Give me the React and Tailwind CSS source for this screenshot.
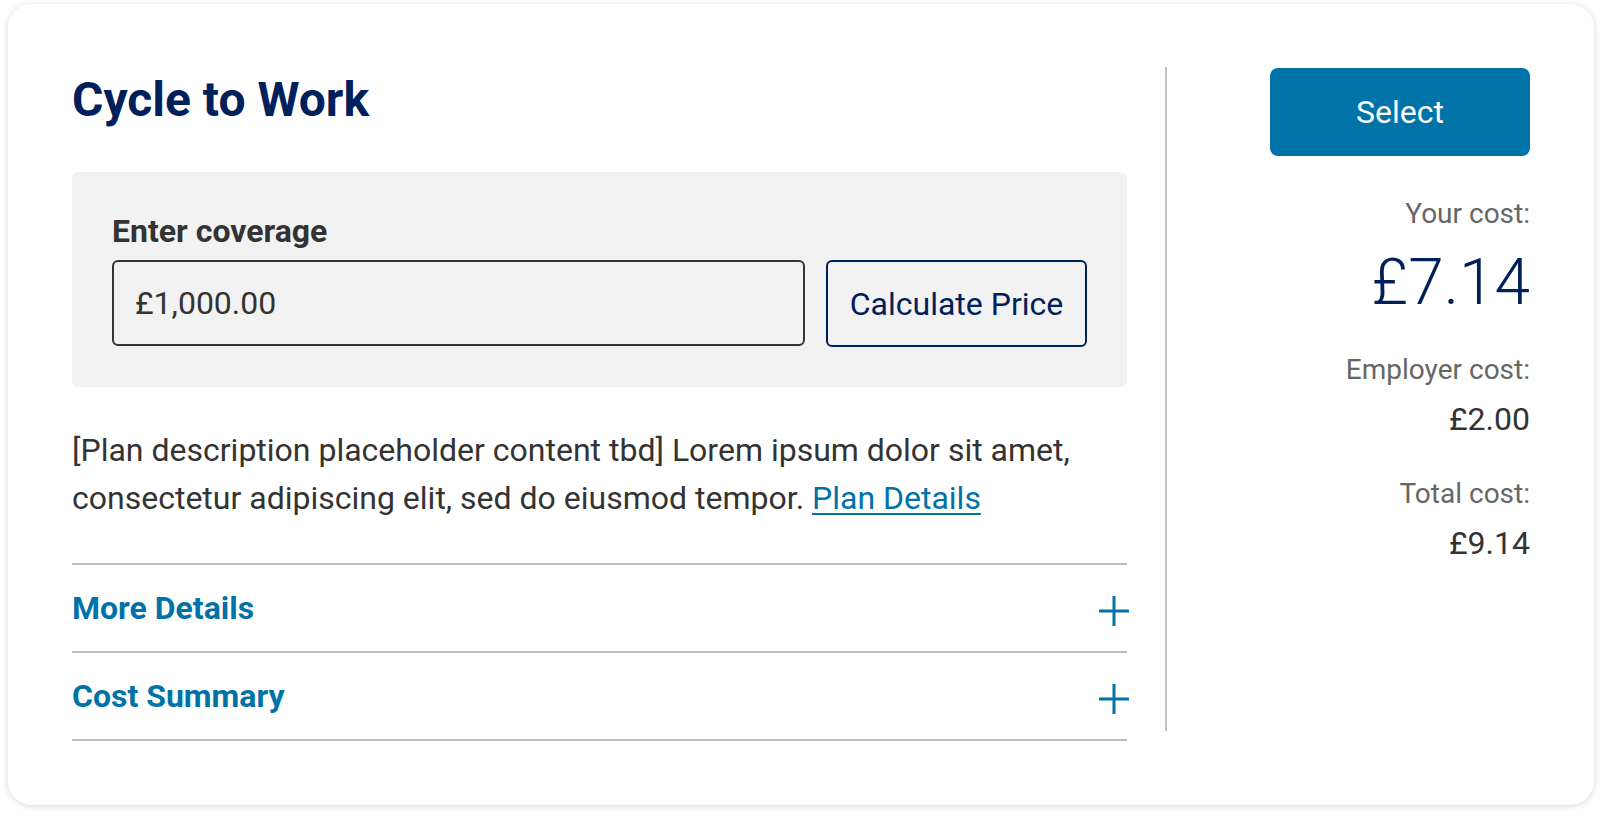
import React from "react";

function Plus() {
  return (
    <svg width="30" height="30" viewBox="0 0 30 30" className="-mr-[2px] mt-[6px] shrink-0">
      <path d="M15 0V30M0 15H30" stroke="#0072a8" strokeWidth="3" fill="none" />
    </svg>
  );
}

function AccordionRow({ title, last }) {
  return (
    <div
      className={
        "flex h-[88px] items-center justify-between border-t-2 border-[#bdbdbd] " +
        (last ? "border-b-2 h-[90px]" : "")
      }
    >
      <span className="text-[32px] font-bold leading-[40px] text-[#0072a8]">{title}</span>
      <Plus />
    </div>
  );
}

export default function App() {
  return (
    <div className="min-h-[818px] w-[1602px] bg-white px-[8px] pt-[4px] font-['Roboto',sans-serif]">
      <div className="flex w-[1586px] rounded-[24px] bg-white p-[64px] shadow-[0_1px_7px_rgba(0,0,0,0.16)]">
        {/* Left column */}
        <div className="flex w-[1055px] flex-col">
          <h1 className="text-[48px] font-bold leading-[64px] text-[#00205b]">Cycle to Work</h1>

          <div className="mt-[40px] rounded-[6px] bg-[#f2f2f2] p-[40px]">
            <div className="text-[32px] font-bold leading-[38px] text-[#333333]">Enter coverage</div>
            <div className="mt-[10px] flex gap-[21px]">
              <div className="flex h-[86px] flex-1 items-center rounded-[6px] border-2 border-[#333333] pl-[21px] text-[32px] text-[#333333]">
                £1,000.00
              </div>
              <button className="flex h-[87px] w-[261px] items-center justify-center rounded-[6px] border-2 border-[#00205b] text-[32px] text-[#00205b]">
                Calculate Price
              </button>
            </div>
          </div>

          <p className="mt-[39px] text-[32px] leading-[48px] text-[#333333]">
            [Plan description placeholder content tbd] Lorem ipsum dolor sit amet, consectetur adipiscing elit, sed do
            eiusmod tempor.{" "}
            <a href="#" className="text-[#0072a8] underline underline-offset-[4px] decoration-[2px]">
              Plan Details
            </a>
          </p>

          <div className="mt-[41px]">
            <AccordionRow title="More Details" />
            <AccordionRow title="Cost Summary" last />
          </div>
        </div>

        {/* Divider */}
        <div className="-mt-[1px] ml-[38px] h-[664px] w-[2px] shrink-0 bg-[#c4c4c4]" />

        {/* Right column */}
        <div className="flex flex-1 flex-col items-end text-right">
          <button className="flex h-[88px] w-[260px] items-center justify-center rounded-[8px] bg-[#0073a9] text-[32px] text-white">
            Select
          </button>
          <div className="mt-[37px] text-[28px] leading-[42px] text-[#666666]">Your cost:</div>
          <div className="mt-[10px] text-[64px] font-light leading-[76px] text-[#00205b]">£7.14</div>
          <div className="mt-[28px] text-[28px] leading-[42px] text-[#666666]">Employer cost:</div>
          <div className="mt-[7px] text-[32px] leading-[42px] text-[#333333]">£2.00</div>
          <div className="mt-[33px] text-[28px] leading-[42px] text-[#666666]">Total cost:</div>
          <div className="mt-[7px] text-[32px] leading-[42px] text-[#333333]">£9.14</div>
        </div>
      </div>
    </div>
  );
}
